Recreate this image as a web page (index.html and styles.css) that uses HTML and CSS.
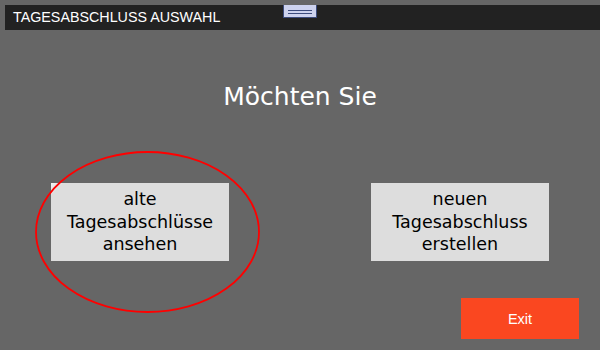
FILE: index.html
```html
<!DOCTYPE html>
<html lang="de">
<head>
    <meta charset="UTF-8">
    <meta name="viewport" content="width=device-width, initial-scale=1.0">
    <title>Tagesabschluss Auswahl</title>
    <link rel="stylesheet" href="styles.css">
</head>
<body>
    <div id="window">
        <div class="grip"><span></span><span></span></div>
        <div class="titlebar">TAGESABSCHLUSS AUSWAHL</div>
        <h1 class="question">Möchten Sie</h1>
        <div class="choices">
            <button class="choice choice-old">alte<br>Tagesabschlüsse<br>ansehen</button>
            <button class="choice">neuen<br>Tagesabschluss<br>erstellen</button>
        </div>
        <div class="footer">
            <button class="exit-button">Exit</button>
        </div>
        <svg class="highlight" width="600" height="350" viewBox="0 0 600 350">
            <ellipse cx="147.5" cy="227" rx="111.5" ry="80" fill="none" stroke="#ff0000" stroke-width="1.8"/>
        </svg>
    </div>
</body>
</html>
```

FILE: styles.css
```css
html, body {
    margin: 0;
    padding: 0;
}

body {
    background-color: #666666;
    width: 600px;
    height: 350px;
    overflow: hidden;
}

#window {
    position: relative;
    width: 600px;
    height: 350px;
}

.grip {
    position: absolute;
    top: 0;
    left: 283px;
    width: 34px;
    height: 13px;
    background: #cdd2ee;
    border: 1px solid #3c4b7c;
    border-top: none;
    display: flex;
    flex-direction: column;
    align-items: center;
    padding-top: 5px;
    box-sizing: border-box;
    gap: 2px;
    z-index: 2;
}

.grip span {
    display: block;
    width: 24px;
    height: 1px;
    background: #3c4b7c;
}

.titlebar {
    margin: 5px 0 0 5px;
    height: 25px;
    line-height: 25px;
    padding-left: 8px;
    background-color: #222222;
    color: #ffffff;
    font-family: "Liberation Sans", Arial, sans-serif;
    font-size: 14.3px;
}

.question {
    margin: 52px 0 0 0;
    font-family: "DejaVu Sans", Verdana, sans-serif;
    font-weight: normal;
    font-size: 25px;
    line-height: 30px;
    color: #ffffff;
    text-align: center;
}

.choices {
    display: flex;
    justify-content: center;
    gap: 142px;
    margin-top: 71px;
}

.choice {
    width: 178px;
    height: 78px;
    padding: 0;
    border: none;
    background-color: #dddddd;
    color: #000000;
    font-family: "DejaVu Sans", Verdana, sans-serif;
    font-size: 17.5px;
    line-height: 22.5px;
}

.choice-old {
    background: linear-gradient(135deg, #f4f4f4 0, #dddddd 9px) #dddddd;
}

.footer {
    display: flex;
    justify-content: flex-end;
    padding-right: 21px;
    margin-top: 37px;
}

.exit-button {
    width: 118px;
    height: 41px;
    border: none;
    background-color: #fa4720;
    color: #ffffff;
    font-family: "Liberation Sans", Arial, sans-serif;
    font-size: 14.5px;
}

.highlight {
    position: absolute;
    top: 0;
    left: 0;
    pointer-events: none;
}
```
